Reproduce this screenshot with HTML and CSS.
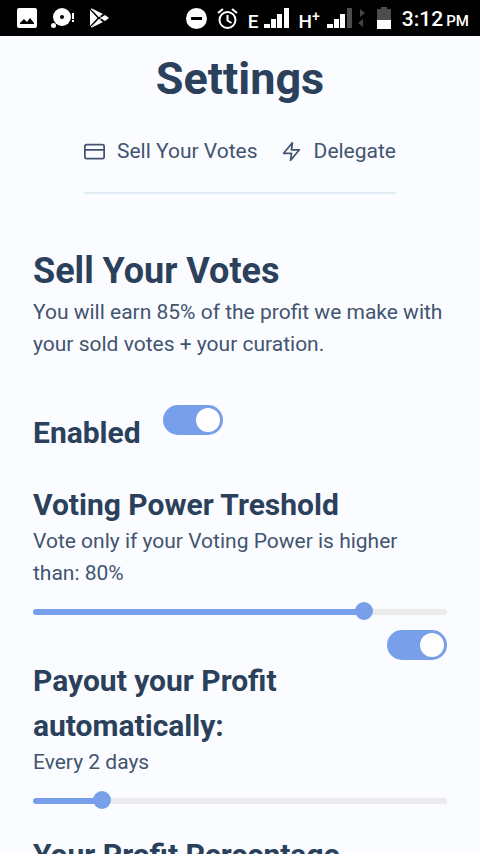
FILE: index.html
```html
<!DOCTYPE html>
<html lang="en">
<head>
<meta charset="utf-8">
<meta name="viewport" content="width=device-width, initial-scale=1">
<title>Settings</title>
<link rel="stylesheet" href="styles.css">
</head>
<body>
<header class="status">
  <div class="status-group notices">
    <svg width="20" height="20" viewBox="0 0 20 20" aria-hidden="true"><path fill="#fff" fill-rule="evenodd" d="M2 0h16a2 2 0 0 1 2 2v16a2 2 0 0 1-2 2H2a2 2 0 0 1-2-2V2a2 2 0 0 1 2-2zM3 16h14v-1l-4-5-3 4-3-3-4 4z"/></svg>
    <svg width="24" height="20" viewBox="0 0 24 20" aria-hidden="true"><circle cx="11" cy="9" r="9" fill="#fff"/><circle cx="11" cy="9" r="2" fill="#000"/><circle cx="2.500" cy="17.500" r="2.500" fill="#fff"/><path fill="#fff" d="M21 5h2v6h-2zM21 12h2v2h-2z"/></svg>
    <svg width="20" height="20" viewBox="0 0 20 20" aria-hidden="true"><path fill="#fff" d="M1 2l7.500 8L1 18zM2 0l12 6-4.500 3zM2 20l12-6-4.500-3zM12 10l4-3 4 3-4 3z"/><path stroke="#fff" d="M2 1l13 11M2 19L15 8"/></svg>
  </div>
  <div class="status-group signals">
    <svg class="round" width="21" height="21" viewBox="0 0 21 21" aria-hidden="true"><circle cx="10.500" cy="10.500" r="10.500" fill="#fff"/><path fill="#000" d="M5 9h11v3H5z"/></svg>
    <svg class="round" width="21" height="21" viewBox="0 0 21 21" fill="none" stroke="#fff" stroke-width="2" aria-hidden="true"><circle cx="10.500" cy="12" r="8"/><path d="M10.500 7v5.500l4 2.500M1 5l5-4M20 5l-5-4"/></svg>
    <span class="net">E</span>
    <svg width="25" height="20" viewBox="0 0 25 20" fill="#fff" aria-hidden="true"><path d="M0 16h6v4H0zM7 11h5v9H7zM13 6h5v14h-5zM20 0h5v20h-5z"/></svg>
    <span class="net wide">H<sup>+</sup></span>
    <svg width="25" height="20" viewBox="0 0 25 20" fill="#fff" aria-hidden="true"><path d="M0 16h6v4H0zM7 11h5v9H7zM13 6h5v14h-5z"/><path fill="#4d4d4d" d="M20 0h5v20h-5z"/></svg>
    <svg width="7" height="18" viewBox="0 0 7 18" fill="#444" aria-hidden="true"><path d="M2 0l5 4-5 4zM5 10v8l-5-4z"/></svg>
    <svg class="battery" width="14" height="22" viewBox="0 0 14 22" aria-hidden="true"><path fill="#4d4d4d" d="M4 0h6v2h4v11H0V2h4z"/><path fill="#fff" d="M0 13h14v9H0z"/></svg>
    <time class="clock">3:12 <small>PM</small></time>
  </div>
</header>
<main class="page">
  <h1>Settings</h1>
  <nav class="tabs">
    <a href="#sell"><svg width="21" height="21" viewBox="0 0 24 24" fill="none" stroke="currentColor" stroke-width="2" stroke-linecap="round" stroke-linejoin="round" aria-hidden="true"><rect x="1" y="4" width="22" height="16" rx="2"/><path d="M1 10h22"/></svg>Sell Your Votes</a>
    <a href="#delegate"><svg width="21" height="21" viewBox="0 0 24 24" fill="none" stroke="currentColor" stroke-width="2" stroke-linecap="round" stroke-linejoin="round" aria-hidden="true"><path d="M13 2L3 14h9l-1 8 10-12h-9z"/></svg>Delegate</a>
  </nav>
  <section class="panel" id="sell">
    <h2>Sell Your Votes</h2>
    <p>You will earn 85% of the profit we make with your sold votes + your curation.</p>
    <div class="enabled">
      <h3><label for="enabled">Enabled</label></h3>
      <input class="switch" type="checkbox" id="enabled" checked>
    </div>
    <div class="setting">
      <h3><label for="threshold">Voting Power Treshold</label></h3>
      <p>Vote only if your Voting Power is higher than: 80%</p>
      <div class="slider" style="--fill: 80%"><input type="range" id="threshold" min="0" max="100" value="80"></div>
    </div>
    <div class="setting">
      <input class="switch end" type="checkbox" checked aria-label="Automatic payout">
      <h3><label for="payout">Payout your Profit automatically:</label></h3>
      <p>Every 2 days</p>
      <div class="slider" style="--fill: calc(100% / 6)"><input type="range" id="payout" min="1" max="7" value="2"></div>
    </div>
    <div class="setting spaced">
      <h3>Your Profit Percentage</h3>
    </div>
  </section>
</main>
</body>
</html>
```
FILE: styles.css
```css
* { box-sizing: border-box; }

html { scrollbar-width: none; }

body {
  margin: 0;
  background: #fbfcff;
  color: #42546f;
  font: 400 21px/32px Roboto, sans-serif;
}

h1, h2, h3, p { margin: 0; }

h1, h2, h3 {
  color: #2a405b;
  font-weight: 700;
}

h1 {
  font-size: 45px;
  line-height: 68px;
  text-align: center;
}

h2 { font-size: 36px; line-height: 54px; }
h3 { font-size: 30px; line-height: 45px; }
h2 + p, h3 + p { margin-top: -2px; }

.status {
  display: flex;
  justify-content: space-between;
  align-items: center;
  height: 36px;
  padding: 0 11px 0 17px;
  background: #000;
  color: #fff;
}

.status-group { display: flex; align-items: center; }
.notices { gap: 14px; }
.signals { gap: 6px; }
.signals svg { flex: none; }
.signals .round { margin-right: 4px; }
.signals .battery { margin: 0 5px 0 6px; }

.net {
  font-size: 19px;
  font-weight: 500;
  line-height: 20px;
  padding-top: 7px;
  white-space: nowrap;
}

.wide { margin: 0 1px 0 3px; }
.net sup { font-size: 14px; line-height: 1px; }

.clock {
  padding-top: 4px;
  font-size: 21px;
  font-weight: 500;
  white-space: nowrap;
}

.clock small { font-size: 15px; margin-left: -2px; }

.page { padding: 9px 33px 32px; }

.tabs {
  display: flex;
  gap: 23px;
  width: fit-content;
  margin: 0 auto 50px;
  padding: 22px 0 25px;
  border-bottom: 2px solid #e0ecf4;
}

.tabs a {
  display: flex;
  align-items: center;
  gap: 12px;
  color: inherit;
  text-decoration: none;
}

.enabled {
  display: flex;
  align-items: flex-start;
  gap: 22px;
  margin: 45px 0 27px;
}

.enabled h3 { padding-top: 5px; }

.switch {
  appearance: none;
  display: flex;
  align-items: center;
  width: 60px;
  height: 30px;
  margin: 0;
  padding: 3px;
  border-radius: 15px;
  background: #ebebeb;
}

.switch::before {
  content: "";
  width: 24px;
  height: 24px;
  border-radius: 50%;
  background: #fff;
}

.switch:checked {
  justify-content: flex-end;
  background: #789fea;
}

.end { margin: 0 0 -2px auto; }

.slider {
  height: 6px;
  margin: 20px 0 15px;
  border-radius: 3px;
  background: linear-gradient(#789fea, #789fea) 0 0 / var(--fill) 100% no-repeat #ebebeb;
}

.slider input {
  appearance: none;
  display: block;
  width: calc(100% + 18px);
  height: 6px;
  margin: 0 -9px;
  background: none;
}

.slider input::-webkit-slider-thumb {
  appearance: none;
  width: 18px;
  height: 18px;
  margin-top: -2px;
  border-radius: 50%;
  background: #789fea;
}

.spaced { padding-top: 13px; }
```
